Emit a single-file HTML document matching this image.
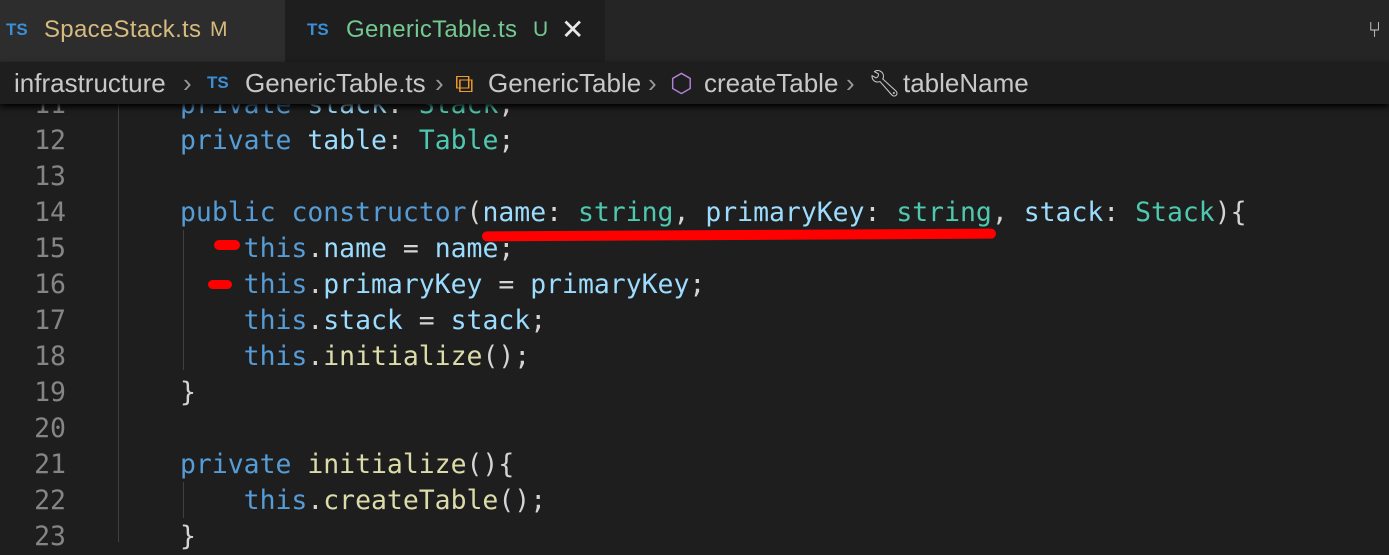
<!DOCTYPE html>
<html><head><style>
body{margin:0;width:1389px;height:542px;overflow:hidden;background:#1e1e1e;position:relative;font-family:"DejaVu Sans Mono",monospace}
.ui{font-family:"Liberation Sans","DejaVu Sans",sans-serif}
.tabs{position:absolute;left:0;top:0;width:1389px;height:62px;background:#252526}
.a{position:absolute;white-space:nowrap}
.tabs .a{top:0;line-height:60px;font-size:24px}
.tabs .ts,.bc .ts{color:#3b8fd6;font-weight:bold;font-size:17px}
.bc{position:absolute;left:0;top:62px;width:1389px;height:42px;background:#1e1e1e;line-height:42px;font-size:26px;color:#c8c8c8;box-shadow:0 3px 6px #000;z-index:2}
.bc .a{top:0}
.sep{color:#999}
.ln{position:absolute;left:0;width:66px;text-align:right;color:#858585;font-size:26.5px;line-height:36px}
.cd{position:absolute;left:180px;font-size:26.45px;line-height:36px;white-space:pre;color:#d4d4d4}
.k{color:#569cd6}.v{color:#9cdcfe}.t{color:#4ec9b0}.f{color:#dcdcaa}
.g{position:absolute;width:1px;background:#404040}
.red{position:absolute;background:#f00;border-radius:6px}
</style></head><body>
<div class="tabs ui">
 <div class="a" style="left:0;width:285px;height:62px;background:#2d2d2d"></div>
 <div class="a" style="left:285px;width:320px;height:62px;background:#1e1e1e"></div>
 <div class="a ts" style="left:6px">TS</div>
 <div class="a" style="left:44px;color:#d7ba7d;letter-spacing:0.3px">SpaceStack.ts</div>
 <div class="a" style="left:210px;color:#d7ba7d;font-size:21px">M</div>
 <div class="a ts" style="left:307px">TS</div>
 <div class="a" style="left:346px;color:#73c991;letter-spacing:0.3px">GenericTable.ts</div>
 <div class="a" style="left:533px;color:#73c991;font-size:21px">U</div>
 <div class="a" style="left:561px;color:#e8e8e8;font-size:28px">✕</div>
 <div class="a" style="left:1368px;color:#ccc;font-size:22px">⑂</div>
</div>
<div class="bc ui">
 <div class="a" style="left:14px">infrastructure</div>
 <div class="a sep" style="left:183px">›</div>
 <div class="a ts" style="left:207px">TS</div>
 <div class="a" style="left:245px">GenericTable.ts</div>
 <div class="a sep" style="left:435px">›</div>
 <div class="a" style="left:455px;color:#ee9d28">⧉</div>
 <div class="a" style="left:488px">GenericTable</div>
 <div class="a sep" style="left:648px">›</div>
 <div class="a" style="left:670px;color:#b180d7">⬡</div>
 <div class="a" style="left:704px">createTable</div>
 <div class="a sep" style="left:846px">›</div>
 <div class="a" style="left:868px">🔧︎</div>
 <div class="a" style="left:903px">tableName</div>
</div>

<div class="g" style="left:118px;top:100px;height:442px"></div>
<div class="g" style="left:183px;top:230px;height:140px"></div>
<div class="g" style="left:183px;top:482px;height:36px"></div>

<div class="ln" style="top:87px">11</div>
<div class="ln" style="top:123px">12</div>
<div class="ln" style="top:159px">13</div>
<div class="ln" style="top:195px">14</div>
<div class="ln" style="top:231px">15</div>
<div class="ln" style="top:267px">16</div>
<div class="ln" style="top:303px">17</div>
<div class="ln" style="top:339px">18</div>
<div class="ln" style="top:375px">19</div>
<div class="ln" style="top:411px">20</div>
<div class="ln" style="top:447px">21</div>
<div class="ln" style="top:483px">22</div>
<div class="ln" style="top:519px">23</div>

<div class="cd" style="top:87px"><span class="k">private</span> <span class="v">stack</span>: <span class="t">Stack</span>;</div>
<div class="cd" style="top:123px"><span class="k">private</span> <span class="v">table</span>: <span class="t">Table</span>;</div>
<div class="cd" style="top:195px"><span class="k">public</span> <span class="k">constructor</span>(<span class="v">name</span>: <span class="t">string</span>, <span class="v">primaryKey</span>: <span class="t">string</span>, <span class="v">stack</span>: <span class="t">Stack</span>){</div>
<div class="cd" style="top:231px">    <span class="k">this</span>.<span class="v">name</span> = <span class="v">name</span>;</div>
<div class="cd" style="top:267px">    <span class="k">this</span>.<span class="v">primaryKey</span> = <span class="v">primaryKey</span>;</div>
<div class="cd" style="top:303px">    <span class="k">this</span>.<span class="v">stack</span> = <span class="v">stack</span>;</div>
<div class="cd" style="top:339px">    <span class="k">this</span>.<span class="f">initialize</span>();</div>
<div class="cd" style="top:375px">}</div>
<div class="cd" style="top:447px"><span class="k">private</span> <span class="f">initialize</span>(){</div>
<div class="cd" style="top:483px">    <span class="k">this</span>.<span class="f">createTable</span>();</div>
<div class="cd" style="top:519px">}</div>

<div class="red" style="left:482px;top:230px;width:514px;height:10px;transform:rotate(-0.3deg)"></div>
<div class="red" style="left:214px;top:240px;width:26px;height:10px"></div>
<div class="red" style="left:208px;top:280px;width:24px;height:9px"></div>
</body></html>
